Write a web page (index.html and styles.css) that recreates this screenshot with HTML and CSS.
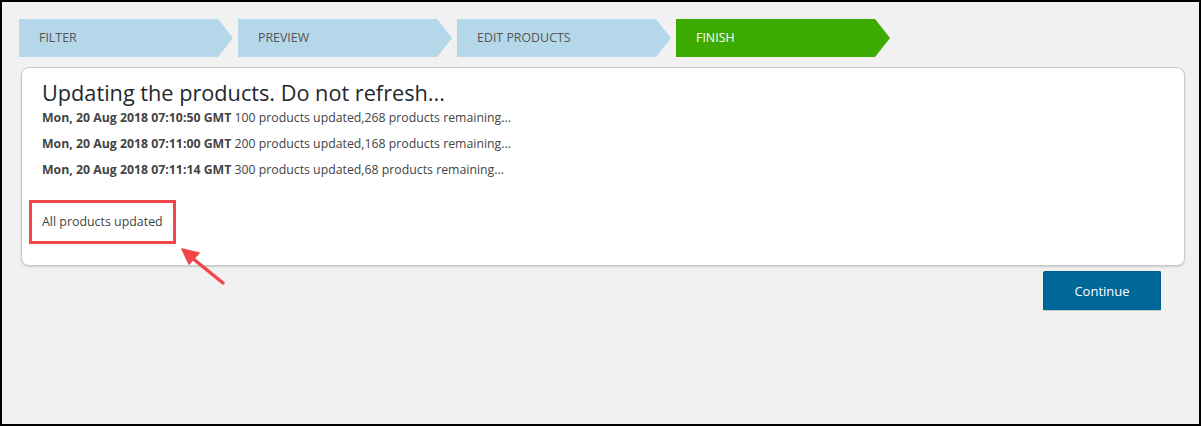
FILE: index.html
```html
<!DOCTYPE html>
<html>
<head>
<meta charset="utf-8">
<link rel="stylesheet" href="styles.css">
</head>
<body>
<div class="frame">
  <div class="steps">
    <div class="step">FILTER</div>
    <div class="step">PREVIEW</div>
    <div class="step">EDIT PRODUCTS</div>
    <div class="step step-active">FINISH</div>
  </div>
  <div class="card">
    <h1 class="title">Updating the products. Do not refresh...</h1>
    <div class="log">
      <div class="log-line"><b>Mon, 20 Aug 2018 07:10:50 GMT</b> 100 products updated,268 products remaining...</div>
      <div class="log-line"><b>Mon, 20 Aug 2018 07:11:00 GMT</b> 200 products updated,168 products remaining...</div>
      <div class="log-line"><b>Mon, 20 Aug 2018 07:11:14 GMT</b> 300 products updated,68 products remaining...</div>
    </div>
    <div class="done"><span class="highlight">All products updated</span></div>
  </div>
  <div class="actions">
    <button class="btn">Continue</button>
  </div>
  <svg class="arrow" width="60" height="50" viewBox="0 0 60 50">
    <line x1="50" y1="43" x2="18" y2="17" stroke="#f0474a" stroke-width="3.5" stroke-linecap="round"/>
    <polygon points="9,9 26,13 16,24" fill="#f0474a" stroke="#f0474a" stroke-width="1.5" stroke-linejoin="round"/>
  </svg>
</div>
</body>
</html>
```
FILE: styles.css
```css
* { box-sizing: border-box; }
html, body { margin: 0; padding: 0; }
body { font-family: "Open Sans", "Noto Sans", sans-serif; }
.frame {
  position: relative;
  width: 1201px;
  height: 426px;
  border: 2px solid #000;
  background: #f1f1f1;
  padding: 17px 14px 0 17px;
}
.steps {
  display: flex;
  gap: 5px;
}
.step {
  width: 214px;
  height: 38px;
  line-height: 38px;
  padding-left: 20px;
  background: #b5d7ea;
  color: #555;
  font-size: 12.4px;
  clip-path: polygon(0 0, calc(100% - 15px) 0, 100% 50%, calc(100% - 15px) 100%, 0 100%);
}
.step-active {
  background: #3caa00;
  color: #fff;
}
.card {
  margin: 10px 0 0 2px;
  width: 1164px;
  height: 199px;
  background: #fff;
  border: 1px solid #c9c9c9;
  border-radius: 8px;
  box-shadow: 0 1px 2px rgba(0,0,0,0.15);
  padding: 13px 20px 0 20px;
}
.title {
  margin: 0;
  font-size: 21.7px;
  line-height: 24px;
  font-weight: 400;
  color: #23282d;
}
.log-line {
  font-size: 12.3px;
  line-height: 26px;
  color: #444;
}
.log-line b { font-weight: 700; }
.done {
  margin-top: 17px;
  font-size: 12.4px;
  line-height: 26px;
  color: #444;
}
.highlight {
  display: inline-block;
  margin-left: -13px;
  padding: 6px 10px;
  border: 3px solid #f0474a;
}
.actions {
  display: flex;
  justify-content: flex-end;
  width: 1166px;
  padding-right: 24px;
  margin-top: 5px;
}
.btn {
  width: 118px;
  height: 40px;
  background: #006799;
  color: #fff;
  border: 1px solid #005d8c;
  border-bottom-color: #c8c8c8;
  border-radius: 2px;
  font-family: "Open Sans", "Noto Sans", sans-serif;
  font-size: 13px;
}
.arrow {
  position: absolute;
  left: 171px;
  top: 238px;
}
```
